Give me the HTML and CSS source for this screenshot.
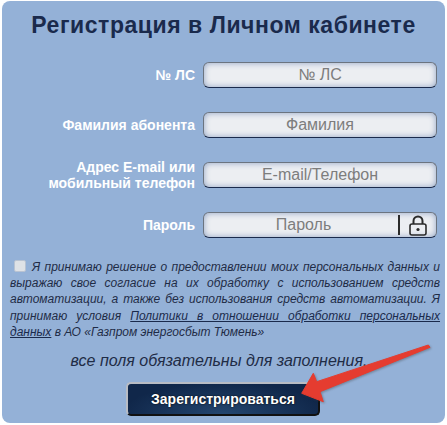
FILE: index.html
```html
<!DOCTYPE html>
<html lang="ru">
<head>
<meta charset="utf-8">
<title>Регистрация</title>
<link rel="stylesheet" href="styles.css">
</head>
<body>
<main class="panel">
  <h1 class="title">Регистрация в Личном кабинете</h1>
  <form class="form">
    <div class="row"><label class="label">№ ЛС</label><div class="field"><input class="input" placeholder="№ ЛС"></div></div>
    <div class="row"><label class="label">Фамилия абонента</label><div class="field"><input class="input" placeholder="Фамилия"></div></div>
    <div class="row"><label class="label">Адрес E-mail или<br>мобильный телефон</label><div class="field"><input class="input" placeholder="E-mail/Телефон"></div></div>
    <div class="row"><label class="label">Пароль</label>
      <div class="field field-pass"><input class="input input-pass" placeholder="Пароль">
        <span class="lock"><svg width="18" height="21" viewBox="0 0 18 21"><path d="M4.5 9V6a4.5 4.5 0 0 1 9 0v3" fill="none" stroke="#2b2b2b" stroke-width="2"/><rect x="1" y="9" width="16" height="11" rx="2" fill="none" stroke="#2b2b2b" stroke-width="1.6"/><circle cx="9" cy="14.5" r="1.6" fill="#2b2b2b"/></svg></span>
      </div>
    </div>
    <p class="agree"><span class="check"></span>Я принимаю решение о предоставлении моих персональных данных и выражаю свое согласие на их обработку с использованием средств автоматизации, а также без использования средств автоматизации. Я принимаю условия <a class="link" href="#">Политики в отношении обработки персональных данных</a> в АО «Газпром энергосбыт Тюмень»</p>
    <p class="note">все поля обязательны для заполнения...</p>
    <button class="submit" type="button">Зарегистрироваться</button>
  </form>
  <svg class="arrow" width="135" height="62" viewBox="0 0 135 62"><path d="M1.7 49.3 L13.3 29.3 L16.7 37.7 L128.3 1 L130 3.3 L20 47.7 L23.3 57.7 Z" fill="#e53c30" stroke="#e53c30" stroke-linejoin="round" stroke-width="1"/></svg>
</main>
</body>
</html>
```
FILE: styles.css
```css
html, body { margin: 0; padding: 0; background: #fff; }
body { width: 447px; height: 425px; overflow: hidden; font-family: "Liberation Sans", Arial, sans-serif; }
.panel { position: relative; box-sizing: border-box; width: 443px; height: 422px; margin: 1px 0 0 2px; padding: 9px 6px 0; background: #94b1d7; border-radius: 8px; }
.title { margin: 0 0 22px; text-align: center; font-size: 23px; line-height: 30px; font-weight: bold; letter-spacing: 0.55px; color: #1a2a4c; }
.form { display: flex; flex-direction: column; }
.row { display: flex; align-items: center; height: 26px; margin-bottom: 24px; }
.label { width: 187px; text-align: right; font-size: 14px; line-height: 16px; font-weight: bold; color: #fff; }
.field { box-sizing: border-box; display: flex; width: 234px; height: 26px; margin-left: 8px; background: #eceef2; border: 1px solid #6b7480; border-bottom-color: #1a2a4c; border-radius: 6px; box-shadow: inset 0 0 6px #8fa3c4; overflow: hidden; }
.input { flex: 1; min-width: 0; border: 0; padding: 0; margin: 0; background: transparent; text-align: center; font: 16px "Liberation Sans", Arial, sans-serif; outline: none; }
.input::placeholder { color: #7d7d7d; opacity: 1; }
.input-pass { flex: none; box-sizing: border-box; width: 194px; padding-left: 5px; }
.lock { box-sizing: border-box; flex: 1; display: flex; align-items: center; justify-content: center; border-left: 2px solid #2b2b2b; margin: 2px 0; }
.agree { margin: -3px 0 0 2px; width: 430px; font-size: 12px; line-height: 16.2px; font-style: italic; text-align: justify; color: #1f2c46; }
.check { display: inline-block; width: 12px; height: 12px; margin: 0 6px 0 4px; vertical-align: -1px; background: #dfe2e6; border: 1px solid #b9c3d2; box-sizing: border-box; border-radius: 2px; }
.link { color: #1a2a4c; text-decoration: underline; }
.note { margin: 11px 0 0; text-align: center; font-size: 16px; line-height: 20px; font-style: italic; color: #1f2c46; }
.submit { align-self: flex-start; box-sizing: border-box; width: 194px; height: 34px; margin: 11px 0 0 118px; padding: 0; border: 2px solid #111; border-top-color: #b8bcc4; border-left-color: #b8bcc4; border-radius: 5px; background: radial-gradient(ellipse at 50% 100%, #24466f, #10274a 75%); color: #fff; font: bold 14px "Liberation Sans", Arial, sans-serif; text-shadow: 0 0 2px #000; }
.arrow { position: absolute; left: 298px; top: 343px; filter: drop-shadow(1px 1px 1px rgba(60,60,60,.4)); }
```
